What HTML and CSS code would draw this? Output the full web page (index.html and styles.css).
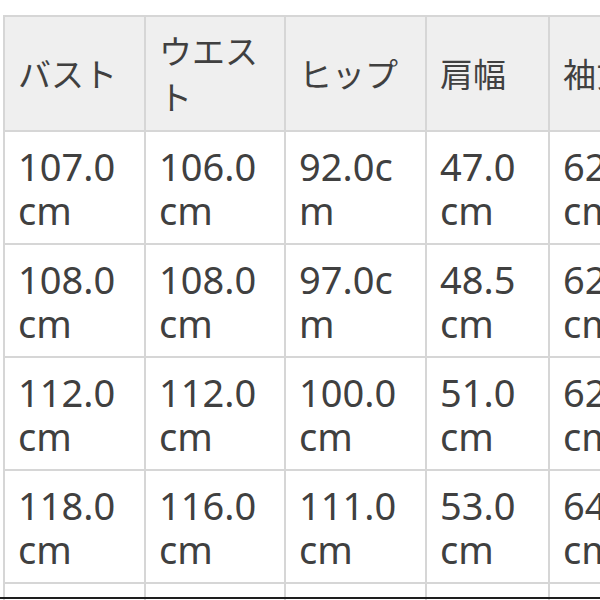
FILE: index.html
```html
<!DOCTYPE html>
<html lang="ja">
<head>
<meta charset="utf-8">
<link rel="stylesheet" href="styles.css">
</head>
<body>
<div class="frame">
<table class="size-table">
  <thead>
    <tr>
      <th class="c1">バスト</th>
      <th class="c2">ウエスト</th>
      <th class="c3">ヒップ</th>
      <th class="c4">肩幅</th>
      <th class="c5">袖丈</th>
      <th class="c6">着丈</th>
    </tr>
  </thead>
  <tbody>
    <tr><td>107.0cm</td><td>106.0cm</td><td>92.0cm</td><td>47.0cm</td><td>62.0cm</td><td>70.0cm</td></tr>
    <tr><td>108.0cm</td><td>108.0cm</td><td>97.0cm</td><td>48.5cm</td><td>62.0cm</td><td>71.0cm</td></tr>
    <tr><td>112.0cm</td><td>112.0cm</td><td>100.0cm</td><td>51.0cm</td><td>62.0cm</td><td>72.0cm</td></tr>
    <tr><td>118.0cm</td><td>116.0cm</td><td>111.0cm</td><td>53.0cm</td><td>64.0cm</td><td>74.0cm</td></tr>
    <tr><td>124.0cm</td><td>122.0cm</td><td>118.0cm</td><td>55.0cm</td><td>65.0cm</td><td>75.0cm</td></tr>
  </tbody>
</table>
</div>
<div class="edge"></div>
</body>
</html>
```
FILE: styles.css
```css
html, body {
  margin: 0;
  padding: 0;
  background: #ffffff;
  overflow: hidden;
  width: 600px;
  height: 600px;
}

.frame {
  padding: 15px 0 0 3px;
  width: 900px;
}

.size-table {
  border-collapse: separate;
  border-spacing: 0;
  table-layout: fixed;
  border-top: 2px solid #d6d6d6;
  border-left: 2px solid #d6d6d6;
  color: #404040;
}

.size-table th,
.size-table td {
  box-sizing: border-box;
  border-right: 2px solid #d6d6d6;
  border-bottom: 2px solid #d6d6d6;
  text-align: left;
  vertical-align: middle;
  padding: 11px 16px 11px 13px;
  word-break: break-all;
}

.size-table th {
  background: #efefef;
  font-family: "Noto Sans CJK JP", sans-serif;
  font-weight: 400;
  font-size: 33px;
  line-height: 46px;
  padding-top: 10px;
  padding-bottom: 11px;
}

.size-table td {
  background: #ffffff;
  font-family: "Noto Sans", "Noto Sans CJK JP", sans-serif;
  font-size: 38px;
  line-height: 44px;
  height: 113px;
}

.c1 { width: 141px; }
.c2 { width: 140px; }
.c3 { width: 141px; }
.c4 { width: 123px; }
.c5 { width: 123px; }
.c6 { width: 140px; }

.edge {
  position: fixed;
  left: 0;
  right: 0;
  top: 597px;
  height: 2px;
  background: #1e1e1e;
}
```
